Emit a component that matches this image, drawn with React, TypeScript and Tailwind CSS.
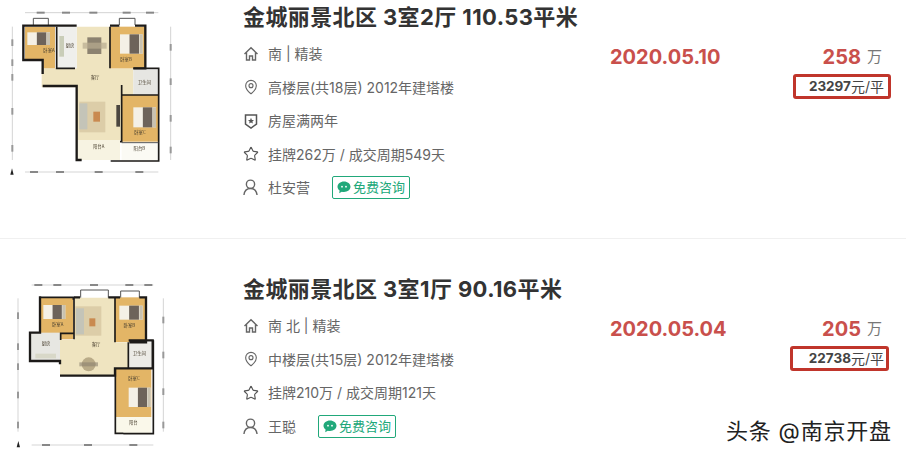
import React from "react";
import { MapPin, Star } from "lucide-react";

const WALL = "#1c1a18";
const ROOM = "#e3b566";
const FLOOR = "#efe4c0";
const TICK = "#a8a8a8";

// the dimension numbers on the plans are unreadable smudges, so they stay smudges
const HDim = ({ y, x1, x2, marks }: { y: number; x1: number; x2: number; marks: number[] }) => (
  <g>
    <line x1={x1} y1={y} x2={x2} y2={y} stroke={TICK} strokeWidth="1.5" />
    {marks.map((m) => (
      <rect key={m} x={m - 12} y={y - 3} width={24} height={6} fill="#888" />
    ))}
  </g>
);

const VDim = ({ x, y1, y2, marks }: { x: number; y1: number; y2: number; marks: number[] }) => (
  <g>
    <line x1={x} y1={y1} x2={x} y2={y2} stroke={TICK} strokeWidth="1.5" />
    {marks.map((m) => (
      <rect key={m} x={x - 3} y={m - 10} width={6} height={20} fill="#999" />
    ))}
  </g>
);

const Bed = ({ x, y, w, h }: { x: number; y: number; w: number; h: number }) => (
  <g>
    <rect x={x} y={y} width={w} height={h} fill="#f4f0e6" />
    <rect x={x + w * 0.42} y={y} width={w * 0.42} height={h} fill="#6d635a" />
    <rect x={x + w * 0.86} y={y} width={w * 0.14} height={h} fill="#c9c2b0" />
  </g>
);

const Label = ({ x, y, children }: { x: number; y: number; children: React.ReactNode }) => (
  <text x={x} y={y} fontSize="13" fill="#4a4030" textAnchor="middle" fontFamily="'Noto Sans CJK SC', sans-serif">
    {children}
  </text>
);

const PlanA = () => (
  <svg viewBox="0 0 690 570" className="w-[230px] h-[190px] shrink-0 blur-[0.6px]">
    <HDim y={38} x1={75} x2={475} marks={[122, 198, 280, 380, 450]} />
    <HDim y={516} x1={75} x2={475} marks={[102, 180, 296, 418]} />
    <VDim x={37} y1={80} y2={480} marks={[128, 188, 232, 334, 445]} />
    <VDim x={512} y1={80} y2={480} marks={[142, 245, 355, 450]} />
    <path d="M230 80H330V205H400V285H365V420H230V262H125V205H230Z" fill={FLOOR} />
    <path d="M75 80H165V205H130V180H75Z" fill={ROOM} />
    <rect x={170} y={80} width={60} height={125} fill="#efefec" />
    <rect x={330} y={80} width={105} height={125} fill={ROOM} />
    <rect x={400} y={210} width={75} height={75} fill="#e6e6e2" />
    <rect x={365} y={285} width={110} height={140} fill={ROOM} />
    <rect x={230} y={420} width={130} height={60} fill="#f7f3e2" />
    <rect x={365} y={430} width={108} height={55} fill="#fbfaf4" />
    <path d="M100 75V55H145V75M358 75V55H405V75" fill="none" stroke="#555" strokeWidth="3" />
    <Bed x={82} y={97} w={68} h={38} />
    <Bed x={360} y={103} w={68} h={58} />
    <Bed x={400} y={322} w={68} h={60} />
    <rect x={178} y={108} width={14} height={62} fill="#c9cdb8" />
    <rect x={262} y={112} width={42} height={50} fill="#8c8270" />
    <rect x={248} y={128} width={72} height={18} fill="#b8ab90" opacity="0.7" />
    <rect x={238} y={305} width={78} height={92} fill="#dccda8" />
    <rect x={238} y={310} width={24} height={78} fill="#c4c4b8" />
    <rect x={280} y={335} width={20} height={30} fill="#c98a50" />
    <rect x={349} y={315} width={11} height={65} fill="#4b463f" />
    <g fill="none" stroke={WALL} strokeWidth="7">
      <path d="M165 77H70V180H128V222M128 258H230V480H245M165 77H230M330 77H358M405 77H436V205H400" />
      <path d="M330 80V205M170 80V205H225M365 255V425H360M365 285H475M400 205H476V483H332" strokeWidth="5" />
    </g>
    <line x1={365} y1={428} x2={475} y2={428} stroke="#555" strokeWidth="3" />
    <Label x={147} y={155}>卧室A</Label>
    <Label x={210} y={142}>厨房</Label>
    <Label x={378} y={182}>卧室B</Label>
    <Label x={285} y={237}>客厅</Label>
    <Label x={433} y={252}>卫生间</Label>
    <Label x={420} y={402}>卧室C</Label>
    <Label x={296} y={445}>阳台A</Label>
    <Label x={418} y={450}>阳台B</Label>
    <path d="M36 505L31 524H41Z" fill="#222" />
  </svg>
);

const PlanB = () => (
  <svg viewBox="0 0 690 570" className="w-[230px] h-[190px] shrink-0 blur-[0.6px]">
    <HDim y={60} x1={95} x2={460} marks={[115, 172, 282, 388, 445]} />
    <HDim y={540} x1={95} x2={460} marks={[138, 264, 400]} />
    <VDim x={54} y1={100} y2={500} marks={[152, 245, 305, 390, 480]} />
    <VDim x={490} y1={100} y2={500} marks={[165, 270, 380, 480]} />
    <path d="M222 98H345V232H385V310H345V330H180V225H222Z" fill={FLOOR} />
    <rect x={122} y={97} width={98} height={126} fill={ROOM} />
    <rect x={345} y={97} width={90} height={134} fill={ROOM} />
    <rect x={92} y={203} width={88} height={85} fill="#e7e7e2" />
    <rect x={386} y={232} width={68} height={76} fill="#ecebe6" />
    <rect x={346} y={312} width={108} height={144} fill={ROOM} />
    <rect x={346} y={456} width={108} height={50} fill="#faf8ea" />
    <path d="M242 98V75H325V98M362 98V78H418V98" fill="none" stroke="#555" strokeWidth="3" />
    <Bed x={130} y={120} w={66} h={42} />
    <Bed x={358} y={122} w={70} h={42} />
    <Bed x={386} y={368} w={66} h={58} />
    <rect x={226} y={124} width={78} height={88} fill="#dccda8" />
    <rect x={228} y={130} width={24} height={78} fill="#c4c4b8" />
    <rect x={268} y={160} width={18} height={24} fill="#c98a50" />
    <circle cx={266} cy={298} r={21} fill="#b9ab88" />
    <rect x={238} y={292} width={56} height={12} fill="#8c8270" opacity="0.6" />
    <rect x={106} y={266} width={62} height={14} fill="#d8d8c8" />
    <g fill="none" stroke={WALL} strokeWidth="7">
      <path d="M120 94V203H90V288H180V298M180 332H345V310H458V226H386M222 97H240M325 97H360M418 97H438V232H388" />
      <path d="M122 97H220V104M220 205H182V225M222 97V223M345 97V232M385 232V310M346 310V505H370M370 506H460V226" strokeWidth="5" />
    </g>
    <Label x={173} y={182}>卧室A</Label>
    <Label x={138} y={240}>厨房</Label>
    <Label x={388} y={186}>卧室B</Label>
    <Label x={288} y={242}>客厅</Label>
    <Label x={418} y={270}>卫生间</Label>
    <Label x={402} y={345}>卧室C</Label>
    <Label x={400} y={478}>阳台</Label>
    <path d="M55 528L50 547H60Z" fill="#222" />
  </svg>
);

const HomeIcon = () => (
  <svg viewBox="0 0 16 16" className="w-[16px] h-[16px]" fill="none" stroke="#666" strokeWidth="1.4">
    <path d="M1.5 8L8 1.8L14.5 8M3.5 6.5V14H6.5V10H9.5V14H12.5V6.5" />
  </svg>
);

const ShieldIcon = () => (
  <svg viewBox="0 0 16 16" className="w-[16px] h-[16px]">
    <path d="M2.5 2H13.5V11L8 15L2.5 11Z" fill="none" stroke="#555" strokeWidth="1.5" />
    <path d="M8 4.8L8.9 6.9L11 7.1L9.4 8.5L9.9 10.6L8 9.5L6.1 10.6L6.6 8.5L5 7.1L7.1 6.9Z" fill="#555" />
  </svg>
);

const UserIcon = () => (
  <svg viewBox="0 0 16 18" className="w-[15px] h-[17px]" fill="none" stroke="#666" strokeWidth="1.5">
    <circle cx="8" cy="5.5" r="4.4" />
    <path d="M1 17C1.5 12.5 4 10 8 10C12 10 14.5 12.5 15 17" />
  </svg>
);

const ChatIcon = () => (
  <svg viewBox="0 0 14 13" className="w-[14px] h-[13px]">
    <path d="M7 0.5C10.6 0.5 13.5 2.8 13.5 5.8C13.5 8.8 10.6 11 7 11C6.2 11 5.5 10.9 4.8 10.7L2.2 12.3L2.6 9.6C1.2 8.6 0.5 7.3 0.5 5.8C0.5 2.8 3.4 0.5 7 0.5Z" fill="#21a87a" />
    <circle cx="5" cy="5.7" r="0.9" fill="#fff" />
    <circle cx="9" cy="5.7" r="0.9" fill="#fff" />
  </svg>
);

const PinIcon = () => <MapPin size={16} color="#666" strokeWidth={1.7} />;
const StarIcon = () => <Star size={16} color="#555" strokeWidth={1.7} />;

const InfoRow = ({ icon, children }: { icon: React.ReactNode; children: React.ReactNode }) => (
  <div className="flex items-center h-[33.5px] text-[14px] text-[#666]">
    <span className="w-[25px] flex justify-start shrink-0">{icon}</span>
    {children}
  </div>
);

interface Listing {
  title: string;
  orient: string;
  floor: string;
  years?: string;
  deal: string;
  agent: string;
  date: string;
  price: string;
  unit: string;
}

const listings: Listing[] = [
  {
    title: "金城丽景北区 3室2厅 110.53平米",
    orient: "南 | 精装",
    floor: "高楼层(共18层) 2012年建塔楼",
    years: "房屋满两年",
    deal: "挂牌262万 / 成交周期549天",
    agent: "杜安营",
    date: "2020.05.10",
    price: "258",
    unit: "23297",
  },
  {
    title: "金城丽景北区 3室1厅 90.16平米",
    orient: "南 北 | 精装",
    floor: "中楼层(共15层) 2012年建塔楼",
    deal: "挂牌210万 / 成交周期121天",
    agent: "王聪",
    date: "2020.05.04",
    price: "205",
    unit: "22738",
  },
];

const ListingRow = ({ item, plan, boxClass }: { item: Listing; plan: React.ReactNode; boxClass: string }) => (
  <div className="flex">
    <div className="w-[243px] shrink-0">{plan}</div>
    <div className="w-[367px] shrink-0">
      <h2 className="h-[36px] text-[22px] leading-[35px] tracking-[0.4px] font-bold text-[#333] whitespace-nowrap">{item.title}</h2>
      <div className="pt-[1px]">
        <InfoRow icon={<HomeIcon />}>{item.orient}</InfoRow>
        <InfoRow icon={<PinIcon />}>{item.floor}</InfoRow>
        {item.years && <InfoRow icon={<ShieldIcon />}>{item.years}</InfoRow>}
        <InfoRow icon={<StarIcon />}>{item.deal}</InfoRow>
        <InfoRow icon={<UserIcon />}>
          <span>{item.agent}</span>
          <span className="ml-[22px] w-[78px] h-[23px] flex items-center justify-center gap-[2px] border border-[#21a87a] rounded-[2px] text-[13px] text-[#21a87a]">
            <ChatIcon />
            免费咨询
          </span>
        </InfoRow>
      </div>
    </div>
    <div className="w-[120px] shrink-0 pt-[43px] text-[20px] leading-[28px] font-bold text-[#c9504c]">{item.date}</div>
    <div className="w-[161px] shrink-0 pt-[43px] flex flex-col items-end">
      <div className="h-[28px] mr-[9px] flex items-center gap-[6px]">
        <span className="text-[20px] font-bold text-[#c9504c]">{item.price}</span>
        <span className="text-[15px] text-[#777]">万</span>
      </div>
      <div className={`mt-[3px] h-[25px] border-[3px] border-[#c0352b] rounded-[3px] flex items-center justify-end text-[14px] text-[#444] ${boxClass}`}>
        <span className="font-bold text-[13.5px]">{item.unit}</span>元/平
      </div>
    </div>
  </div>
);

export default function App() {
  return (
    <div className="relative w-[906px] h-[457px] overflow-hidden bg-white font-['Inter','Noto_Sans_CJK_SC',sans-serif]">
      <div className="h-[239px] border-b border-[#f0f0f0]">
        <ListingRow item={listings[0]} plan={<PlanA />} boxClass="w-[98px] pr-[4px]" />
      </div>
      <div className="pt-[33px]">
        <ListingRow item={listings[1]} plan={<div className="-mt-[7px]"><PlanB /></div>} boxClass="w-[99px] mr-[2px] pr-[2px]" />
      </div>
      <div className="absolute left-[726px] top-[416px] text-[22px] leading-[30px] tracking-[0.8px] text-[#222] [text-shadow:0_0_2px_#fff] whitespace-nowrap">
        头条 @南京开盘
      </div>
    </div>
  );
}
